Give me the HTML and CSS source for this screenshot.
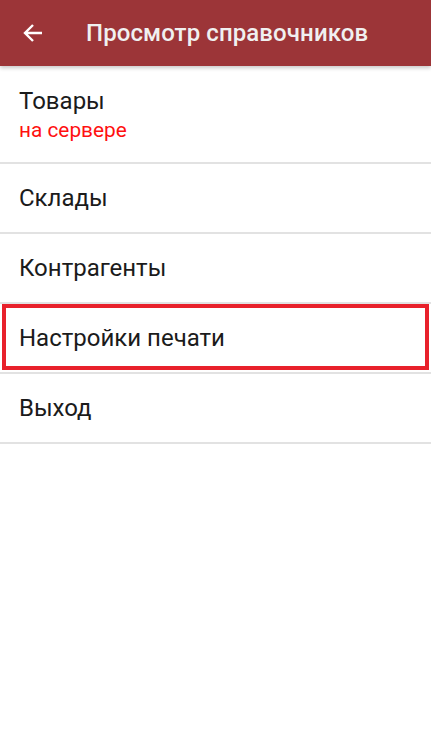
FILE: index.html
```html
<!DOCTYPE html>
<html lang="ru">
<head>
  <meta charset="UTF-8">
  <title>Просмотр справочников</title>
  <meta name="viewport" content="width=device-width, initial-scale=1.0">
  <link rel="stylesheet" href="styles.css">
</head>
<body>
  <div class="screen">
    <!-- Toolbar -->
    <div class="toolbar">
      <span class="back-btn">
        <svg width="20" height="20" viewBox="0 0 20 20">
          <path d="M19 10H2.5M10 2L2 10L10 18" fill="none" stroke="#fff" stroke-width="2.4"/>
        </svg>
      </span>
      <div class="toolbar-title">Просмотр справочников</div>
    </div>
    <!-- Directory list -->
    <div class="menu-list">
      <div class="menu-item tall">
        <div class="item-title">Товары</div>
        <div class="item-sub">на сервере</div>
      </div>
      <div class="menu-item">
        <div class="item-title">Склады</div>
      </div>
      <div class="menu-item">
        <div class="item-title">Контрагенты</div>
      </div>
      <div class="menu-item highlighted">
        <div class="item-title">Настройки печати</div>
        <div class="highlight-box"></div>
      </div>
      <div class="menu-item">
        <div class="item-title">Выход</div>
      </div>
    </div>
  </div>
</body>
</html>
```

FILE: styles.css
```css
:root {
  --bar: #9c3538;
  --divider: #e2e2e2;
  --text: #1b1b1b;
  --accent: #ff1010;
  --mark: #e8212b;
}
body {
  margin: 0;
  padding: 0;
  background: #fff;
  font-family: Roboto, "Noto Sans", Arial, sans-serif;
  color: var(--text);
}
.screen {
  width: 431px;
  height: 739px;
  overflow: hidden;
  position: relative;
}
.toolbar {
  height: 66px;
  background: var(--bar);
  display: flex;
  align-items: center;
  box-shadow: 0 2px 4px rgba(0,0,0,0.22);
  position: relative;
  z-index: 1;
}
.back-btn {
  width: 86px;
  display: flex;
  padding-left: 23px;
  box-sizing: border-box;
}
.back-btn svg {
  display: block;
}
.toolbar-title {
  color: #f0f0f0;
  font-size: 24px;
  font-weight: 500;
  letter-spacing: 0.1px;
}
.menu-list {
  display: flex;
  flex-direction: column;
}
.menu-item {
  height: 68px;
  border-bottom: 2px solid var(--divider);
  padding: 0 19px;
  display: flex;
  flex-direction: column;
  justify-content: center;
  position: relative;
}
.menu-item.tall {
  height: 96px;
}
.item-title {
  font-size: 24px;
  line-height: 31px;
}
.item-sub {
  font-size: 20.8px;
  line-height: 26px;
  color: var(--accent);
}
.highlight-box {
  position: absolute;
  top: 0;
  left: 2px;
  right: 2px;
  bottom: 2px;
  border: 4px solid var(--mark);
}
```
